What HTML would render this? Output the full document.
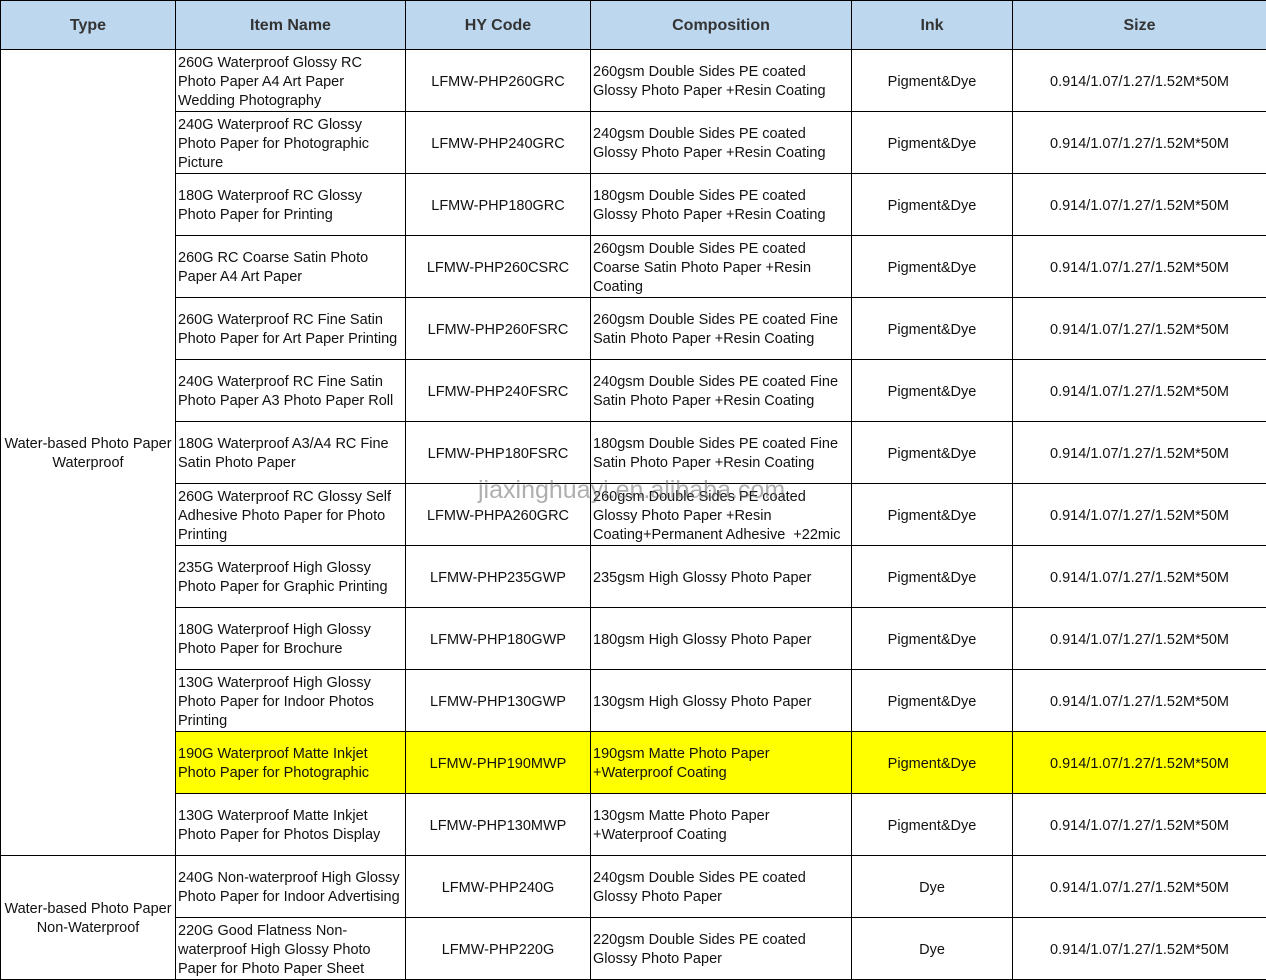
<!DOCTYPE html>
<html><head><meta charset="utf-8">
<style>
body{margin:0;background:#fff;width:1266px;height:980px;overflow:hidden;position:relative;font-family:"Liberation Sans",Arial,sans-serif;}
table{border-collapse:collapse;table-layout:fixed;position:absolute;left:0;top:0;width:1266px;}
td,th{border:1px solid #000;font-size:14.5px;line-height:19px;color:#111;padding:0 2px;overflow:hidden;}
th{background:#bdd7ee;height:47px;padding-top:1px;font-size:16px;font-weight:bold;color:#333;text-align:center;}
td{height:58px;padding-top:3px;}
td.c{text-align:center;}
tr.y td{background:#ffff00;}
td.t{background:#fff !important;text-align:center;}
.wm{position:absolute;left:478px;top:476px;font-size:25px;color:rgba(110,110,110,0.55);}
</style></head><body>
<table>
<colgroup><col style="width:175px"><col style="width:230px"><col style="width:185px"><col style="width:261px"><col style="width:161px"><col style="width:254px"></colgroup>
<tr><th>Type</th><th>Item Name</th><th>HY Code</th><th>Composition</th><th>Ink</th><th>Size</th></tr>
<tr><td class="t" rowspan="13">Water-based Photo Paper Waterproof</td><td>260G Waterproof Glossy RC Photo Paper A4 Art Paper Wedding Photography</td><td class="c">LFMW-PHP260GRC</td><td>260gsm Double Sides PE coated Glossy Photo Paper +Resin Coating</td><td class="c">Pigment&amp;Dye</td><td class="c">0.914/1.07/1.27/1.52M*50M</td></tr>
<tr><td>240G Waterproof RC Glossy Photo Paper for Photographic Picture</td><td class="c">LFMW-PHP240GRC</td><td>240gsm Double Sides PE coated Glossy Photo Paper +Resin Coating</td><td class="c">Pigment&amp;Dye</td><td class="c">0.914/1.07/1.27/1.52M*50M</td></tr>
<tr><td>180G Waterproof RC Glossy Photo Paper for Printing</td><td class="c">LFMW-PHP180GRC</td><td>180gsm Double Sides PE coated Glossy Photo Paper +Resin Coating</td><td class="c">Pigment&amp;Dye</td><td class="c">0.914/1.07/1.27/1.52M*50M</td></tr>
<tr><td>260G RC Coarse Satin Photo Paper A4 Art Paper</td><td class="c">LFMW-PHP260CSRC</td><td>260gsm Double Sides PE coated Coarse Satin Photo Paper +Resin Coating</td><td class="c">Pigment&amp;Dye</td><td class="c">0.914/1.07/1.27/1.52M*50M</td></tr>
<tr><td>260G Waterproof RC Fine Satin Photo Paper for Art Paper Printing</td><td class="c">LFMW-PHP260FSRC</td><td>260gsm Double Sides PE coated Fine Satin Photo Paper +Resin Coating</td><td class="c">Pigment&amp;Dye</td><td class="c">0.914/1.07/1.27/1.52M*50M</td></tr>
<tr><td>240G Waterproof RC Fine Satin Photo Paper A3 Photo Paper Roll</td><td class="c">LFMW-PHP240FSRC</td><td>240gsm Double Sides PE coated Fine Satin Photo Paper +Resin Coating</td><td class="c">Pigment&amp;Dye</td><td class="c">0.914/1.07/1.27/1.52M*50M</td></tr>
<tr><td>180G Waterproof A3/A4 RC Fine Satin Photo Paper</td><td class="c">LFMW-PHP180FSRC</td><td>180gsm Double Sides PE coated Fine Satin Photo Paper +Resin Coating</td><td class="c">Pigment&amp;Dye</td><td class="c">0.914/1.07/1.27/1.52M*50M</td></tr>
<tr><td>260G Waterproof RC Glossy Self Adhesive Photo Paper for Photo Printing</td><td class="c">LFMW-PHPA260GRC</td><td>260gsm Double Sides PE coated Glossy Photo Paper +Resin Coating+Permanent Adhesive &nbsp;+22mic</td><td class="c">Pigment&amp;Dye</td><td class="c">0.914/1.07/1.27/1.52M*50M</td></tr>
<tr><td>235G Waterproof High Glossy Photo Paper for Graphic Printing</td><td class="c">LFMW-PHP235GWP</td><td>235gsm High Glossy Photo Paper</td><td class="c">Pigment&amp;Dye</td><td class="c">0.914/1.07/1.27/1.52M*50M</td></tr>
<tr><td>180G Waterproof High Glossy Photo Paper for Brochure</td><td class="c">LFMW-PHP180GWP</td><td>180gsm High Glossy Photo Paper</td><td class="c">Pigment&amp;Dye</td><td class="c">0.914/1.07/1.27/1.52M*50M</td></tr>
<tr><td>130G Waterproof High Glossy Photo Paper for Indoor Photos Printing</td><td class="c">LFMW-PHP130GWP</td><td>130gsm High Glossy Photo Paper</td><td class="c">Pigment&amp;Dye</td><td class="c">0.914/1.07/1.27/1.52M*50M</td></tr>
<tr class="y"><td>190G Waterproof Matte Inkjet Photo Paper for Photographic</td><td class="c">LFMW-PHP190MWP</td><td>190gsm Matte Photo Paper +Waterproof Coating</td><td class="c">Pigment&amp;Dye</td><td class="c">0.914/1.07/1.27/1.52M*50M</td></tr>
<tr><td>130G Waterproof Matte Inkjet Photo Paper for Photos Display</td><td class="c">LFMW-PHP130MWP</td><td>130gsm Matte Photo Paper +Waterproof Coating</td><td class="c">Pigment&amp;Dye</td><td class="c">0.914/1.07/1.27/1.52M*50M</td></tr>
<tr><td class="t" rowspan="2">Water-based Photo Paper Non-Waterproof</td><td>240G Non-waterproof High Glossy Photo Paper for Indoor Advertising</td><td class="c">LFMW-PHP240G</td><td>240gsm Double Sides PE coated Glossy Photo Paper</td><td class="c">Dye</td><td class="c">0.914/1.07/1.27/1.52M*50M</td></tr>
<tr><td>220G Good Flatness Non-waterproof High Glossy Photo Paper for Photo Paper Sheet</td><td class="c">LFMW-PHP220G</td><td>220gsm Double Sides PE coated Glossy Photo Paper</td><td class="c">Dye</td><td class="c">0.914/1.07/1.27/1.52M*50M</td></tr>
</table>
<div class="wm">jiaxinghuayi.en.alibaba.com</div>
</body></html>
